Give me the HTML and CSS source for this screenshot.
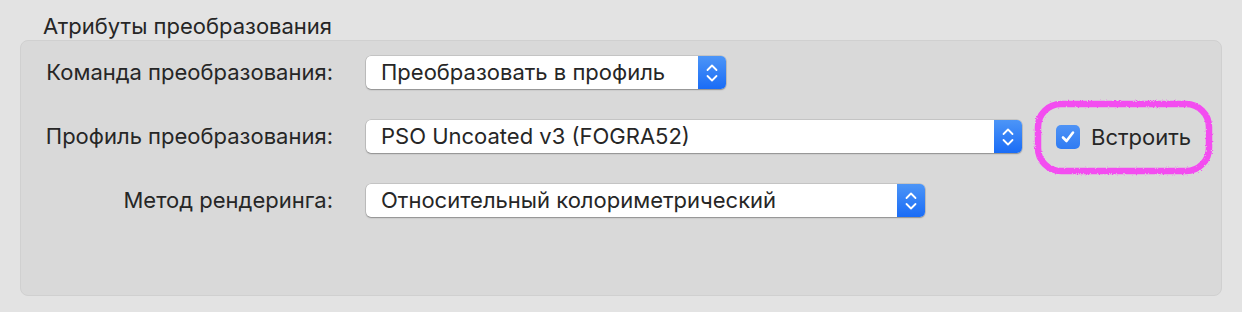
FILE: index.html
```html
<!DOCTYPE html>
<html lang="ru">
<head>
  <meta charset="UTF-8" />
  <title>Атрибуты преобразования</title>
  <link rel="stylesheet" href="styles.css">
</head>
<body>
  <div class="title">Атрибуты преобразования</div>
  <div class="box">
    <div class="form">
      <label class="lbl">Команда преобразования:</label>
      <div class="ctl">
        <div class="popup w1">
          <span class="val">Преобразовать в профиль</span>
          <span class="arrows"><svg width="12" height="22" viewBox="0 0 12 22"><path d="M1.5 8 L6 3.5 L10.5 8 M1.5 14 L6 18.5 L10.5 14" fill="none" stroke="#fff" stroke-width="1.8" stroke-linecap="round" stroke-linejoin="round"/></svg></span>
        </div>
      </div>

      <label class="lbl">Профиль преобразования:</label>
      <div class="ctl">
        <div class="popup w2">
          <span class="val">PSO Uncoated v3 (FOGRA52)</span>
          <span class="arrows"><svg width="12" height="22" viewBox="0 0 12 22"><path d="M1.5 8 L6 3.5 L10.5 8 M1.5 14 L6 18.5 L10.5 14" fill="none" stroke="#fff" stroke-width="1.8" stroke-linecap="round" stroke-linejoin="round"/></svg></span>
        </div>
        <div class="embed">
          <span class="check"><svg width="18" height="18" viewBox="0 0 18 18"><path d="M4 9.5 L7.5 13 L14 4.5" fill="none" stroke="#fff" stroke-width="2.6" stroke-linecap="round" stroke-linejoin="round"/></svg></span>
          <span>Встроить</span>
          <svg class="mark" width="184" height="80" viewBox="0 0 184 80">
            <filter id="rough" x="-5%" y="-10%" width="110%" height="120%">
              <feTurbulence type="fractalNoise" baseFrequency="0.9" numOctaves="2" seed="3"/>
              <feDisplacementMap in="SourceGraphic" scale="3"/>
            </filter>
            <rect x="6" y="6" width="171" height="67" rx="23" fill="none" stroke="#f34df0" stroke-width="6.5" filter="url(#rough)"/>
          </svg>
        </div>
      </div>

      <label class="lbl">Метод рендеринга:</label>
      <div class="ctl">
        <div class="popup w3">
          <span class="val">Относительный колориметрический</span>
          <span class="arrows"><svg width="12" height="22" viewBox="0 0 12 22"><path d="M1.5 8 L6 3.5 L10.5 8 M1.5 14 L6 18.5 L10.5 14" fill="none" stroke="#fff" stroke-width="1.8" stroke-linecap="round" stroke-linejoin="round"/></svg></span>
        </div>
      </div>
    </div>
  </div>
</body>
</html>
```

FILE: styles.css
```css
body {
  margin: 0;
  padding: 0 20px;
  background: #e3e3e3;
  font-family: Inter, "Liberation Sans", sans-serif;
  font-size: 22px;
  color: #262626;
}

.title {
  height: 40px;
  line-height: 52px;
  padding-left: 23px;
  box-sizing: border-box;
}

.box {
  height: 256px;
  box-sizing: border-box;
  background: #d9d9d9;
  border: 1px solid #d0d0d0;
  border-radius: 8px;
  padding-top: 15px;
}

.form {
  display: grid;
  grid-template-columns: 312px 1fr;
  column-gap: 33px;
  row-gap: 31px;
}

.lbl {
  text-align: right;
  height: 33px;
  line-height: 33px;
}

.ctl {
  display: flex;
  align-items: center;
  height: 33px;
}

.popup {
  display: flex;
  height: 33px;
  box-sizing: border-box;
  background: #fff;
  border-radius: 5px;
  box-shadow: 0 0 0 0.5px rgba(0, 0, 0, 0.18), 0 1px 1.5px rgba(0, 0, 0, 0.28);
  overflow: hidden;
}

.w1 { width: 360px; }
.w2 { width: 656px; }
.w3 { width: 559px; }

.val {
  flex: 1;
  padding-left: 15px;
  line-height: 33px;
  white-space: nowrap;
}

.arrows {
  width: 28px;
  display: flex;
  align-items: center;
  justify-content: center;
  background: linear-gradient(to bottom, #4c95f7, #1a6cf6);
}

.embed {
  position: relative;
  display: flex;
  align-items: center;
  margin-left: 34px;
}

.check {
  width: 24px;
  height: 24px;
  margin-right: 11px;
  border-radius: 5px;
  background: linear-gradient(to bottom, #4f93f5, #2f7bf3);
  display: flex;
  align-items: center;
  justify-content: center;
}

.mark {
  position: absolute;
  left: -24px;
  top: -26px;
}
```
